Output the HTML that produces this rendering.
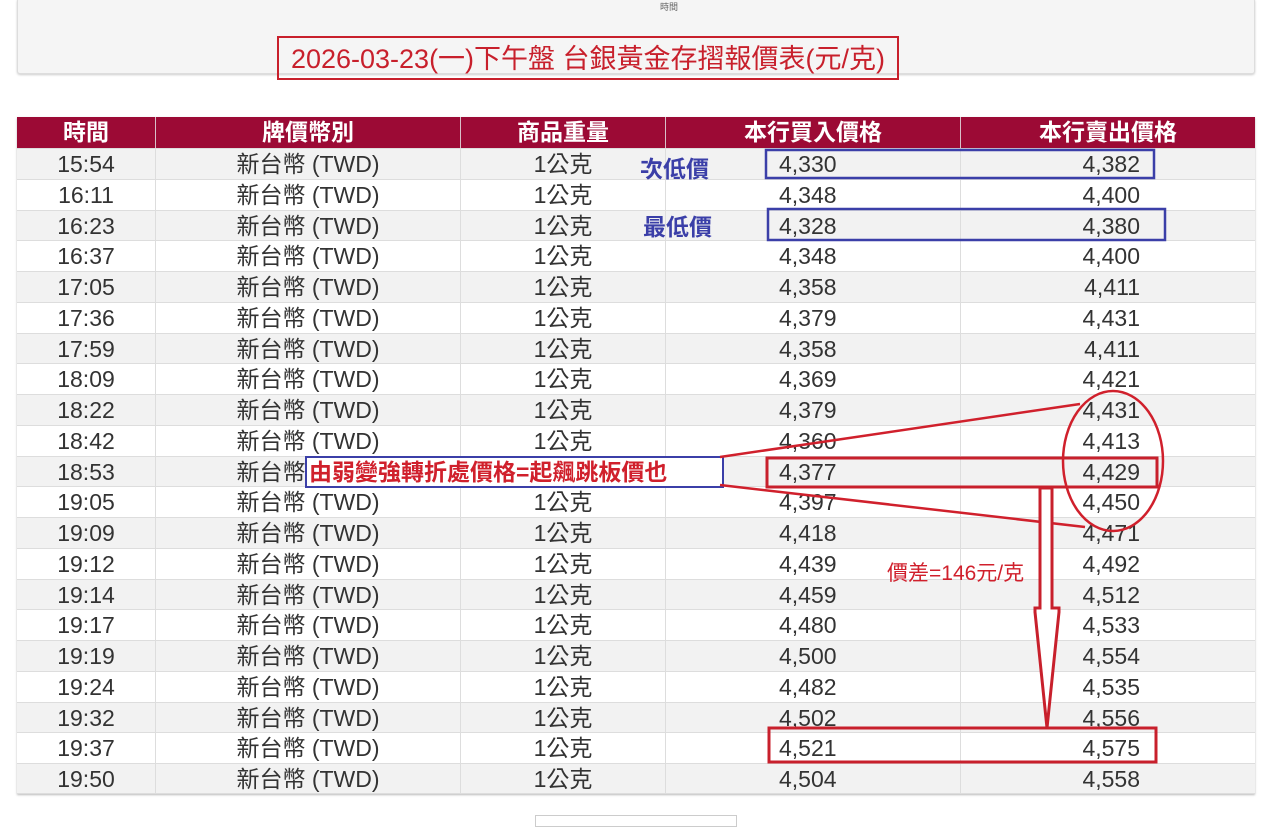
<!DOCTYPE html>
<html><head><meta charset="utf-8"><style>
body{margin:0;width:1280px;height:819px;background:#fff;position:relative;overflow:hidden;font-family:"Liberation Sans","Noto Sans CJK TC",sans-serif;}
.top{position:absolute;left:17px;top:-2px;width:1236px;height:74px;background:#f5f5f5;border:1px solid #ddd;border-radius:3px;box-shadow:0 1px 2px #ccc;}
.small{position:absolute;left:660px;top:0;font-size:9px;color:#666;}
.title{position:absolute;left:277px;top:36px;width:618px;height:40px;border:2px solid #c8202c;color:#c8202c;font-size:27px;line-height:42px;text-align:center;white-space:nowrap;}
.tbl{position:absolute;left:17px;top:117px;width:1238px;box-shadow:0 1px 2px #bbb;}
.r{position:relative;height:30.75px;border-top:1px solid #ddd;box-sizing:border-box;}
.r.h{height:31px;background:#9c0a35;border:none;color:#fff;font-weight:bold;}
.r.g{background:#f2f2f2;}
.r span{position:absolute;top:0;height:100%;line-height:31px;font-size:23px;color:#333;text-align:center;border-left:1px solid #ddd;box-sizing:border-box;white-space:nowrap;}
.r.h span{color:#fff;border-left:1px solid #d8c0c8;line-height:31px;}
.c1{left:0;width:138px;border-left:none!important}
.c2{left:138px;width:305px}
.c3{left:443px;width:205px}
.c4{left:648px;width:295px;text-align:left!important;padding-left:113px}
.c5{left:943px;width:295px;text-align:right!important;padding-right:115px}
.r.h .c4{text-align:center!important;padding-left:0}
.r.h .c5{text-align:center!important;padding-right:0}
.lbl{position:absolute;color:#3b3fa8;font-size:23px;font-weight:bold;}
.note{position:absolute;left:305px;top:456px;width:413px;height:28px;border:2px solid #3b3fa8;background:#fff;color:#d0202c;font-size:23px;font-weight:bold;line-height:28px;padding-left:2px;white-space:nowrap;overflow:hidden;}
.diff{position:absolute;left:887px;top:557px;color:#d0202c;font-size:21px;}
.pg{position:absolute;left:535px;top:815px;width:200px;height:10px;border:1px solid #ccc;}
</style></head><body>
<div class="top"></div>
<div class="small">時間</div>
<div class="title">2026-03-23(一)下午盤 台銀黃金存摺報價表(元/克)</div>
<div class="tbl">
<div class="r h"><span class="c1">時間</span><span class="c2">牌價幣別</span><span class="c3">商品重量</span><span class="c4">本行買入價格</span><span class="c5">本行賣出價格</span></div>
<div class="r g"><span class="c1">15:54</span><span class="c2">新台幣 (TWD)</span><span class="c3">1公克</span><span class="c4">4,330</span><span class="c5">4,382</span></div>
<div class="r"><span class="c1">16:11</span><span class="c2">新台幣 (TWD)</span><span class="c3">1公克</span><span class="c4">4,348</span><span class="c5">4,400</span></div>
<div class="r g"><span class="c1">16:23</span><span class="c2">新台幣 (TWD)</span><span class="c3">1公克</span><span class="c4">4,328</span><span class="c5">4,380</span></div>
<div class="r"><span class="c1">16:37</span><span class="c2">新台幣 (TWD)</span><span class="c3">1公克</span><span class="c4">4,348</span><span class="c5">4,400</span></div>
<div class="r g"><span class="c1">17:05</span><span class="c2">新台幣 (TWD)</span><span class="c3">1公克</span><span class="c4">4,358</span><span class="c5">4,411</span></div>
<div class="r"><span class="c1">17:36</span><span class="c2">新台幣 (TWD)</span><span class="c3">1公克</span><span class="c4">4,379</span><span class="c5">4,431</span></div>
<div class="r g"><span class="c1">17:59</span><span class="c2">新台幣 (TWD)</span><span class="c3">1公克</span><span class="c4">4,358</span><span class="c5">4,411</span></div>
<div class="r"><span class="c1">18:09</span><span class="c2">新台幣 (TWD)</span><span class="c3">1公克</span><span class="c4">4,369</span><span class="c5">4,421</span></div>
<div class="r g"><span class="c1">18:22</span><span class="c2">新台幣 (TWD)</span><span class="c3">1公克</span><span class="c4">4,379</span><span class="c5">4,431</span></div>
<div class="r"><span class="c1">18:42</span><span class="c2">新台幣 (TWD)</span><span class="c3">1公克</span><span class="c4">4,360</span><span class="c5">4,413</span></div>
<div class="r g"><span class="c1">18:53</span><span class="c2">新台幣 (TWD)</span><span class="c3">1公克</span><span class="c4">4,377</span><span class="c5">4,429</span></div>
<div class="r"><span class="c1">19:05</span><span class="c2">新台幣 (TWD)</span><span class="c3">1公克</span><span class="c4">4,397</span><span class="c5">4,450</span></div>
<div class="r g"><span class="c1">19:09</span><span class="c2">新台幣 (TWD)</span><span class="c3">1公克</span><span class="c4">4,418</span><span class="c5">4,471</span></div>
<div class="r"><span class="c1">19:12</span><span class="c2">新台幣 (TWD)</span><span class="c3">1公克</span><span class="c4">4,439</span><span class="c5">4,492</span></div>
<div class="r g"><span class="c1">19:14</span><span class="c2">新台幣 (TWD)</span><span class="c3">1公克</span><span class="c4">4,459</span><span class="c5">4,512</span></div>
<div class="r"><span class="c1">19:17</span><span class="c2">新台幣 (TWD)</span><span class="c3">1公克</span><span class="c4">4,480</span><span class="c5">4,533</span></div>
<div class="r g"><span class="c1">19:19</span><span class="c2">新台幣 (TWD)</span><span class="c3">1公克</span><span class="c4">4,500</span><span class="c5">4,554</span></div>
<div class="r"><span class="c1">19:24</span><span class="c2">新台幣 (TWD)</span><span class="c3">1公克</span><span class="c4">4,482</span><span class="c5">4,535</span></div>
<div class="r g"><span class="c1">19:32</span><span class="c2">新台幣 (TWD)</span><span class="c3">1公克</span><span class="c4">4,502</span><span class="c5">4,556</span></div>
<div class="r"><span class="c1">19:37</span><span class="c2">新台幣 (TWD)</span><span class="c3">1公克</span><span class="c4">4,521</span><span class="c5">4,575</span></div>
<div class="r g" style="border-bottom:1px solid #ddd"><span class="c1">19:50</span><span class="c2">新台幣 (TWD)</span><span class="c3">1公克</span><span class="c4">4,504</span><span class="c5">4,558</span></div>
</div>
<div class="lbl" style="left:640px;top:150px">次低價</div>
<div class="lbl" style="left:643px;top:208px">最低價</div>
<div class="note">由弱變強轉折處價格=起飆跳板價也</div>
<div class="diff">價差=146元/克</div>
<div class="pg"></div>
<svg style="position:absolute;left:0;top:0" width="1280" height="819">
<g fill="none">
<rect x="766" y="150" width="388" height="28" stroke="#3b3fa8" stroke-width="2.5"/>
<rect x="768" y="209" width="397" height="31" stroke="#3b3fa8" stroke-width="2.5"/>
<rect x="767" y="458" width="390" height="29" stroke="#c8202c" stroke-width="3"/>
<rect x="769" y="728" width="387" height="34" stroke="#c8202c" stroke-width="3"/>
<line x1="720" y1="457" x2="1080" y2="404" stroke="#d0202c" stroke-width="2.5"/>
<line x1="720" y1="485" x2="1085" y2="527" stroke="#d0202c" stroke-width="2.5"/>
<ellipse cx="1113" cy="461" rx="50" ry="70" stroke="#d0202c" stroke-width="2.5"/>
<path d="M1040 488 H1052 V608 H1059 V612 L1047 728 L1035 612 V608 H1040 Z" stroke="#c8202c" stroke-width="3" fill="#fff"/>
</g>
</svg>
</body></html>
